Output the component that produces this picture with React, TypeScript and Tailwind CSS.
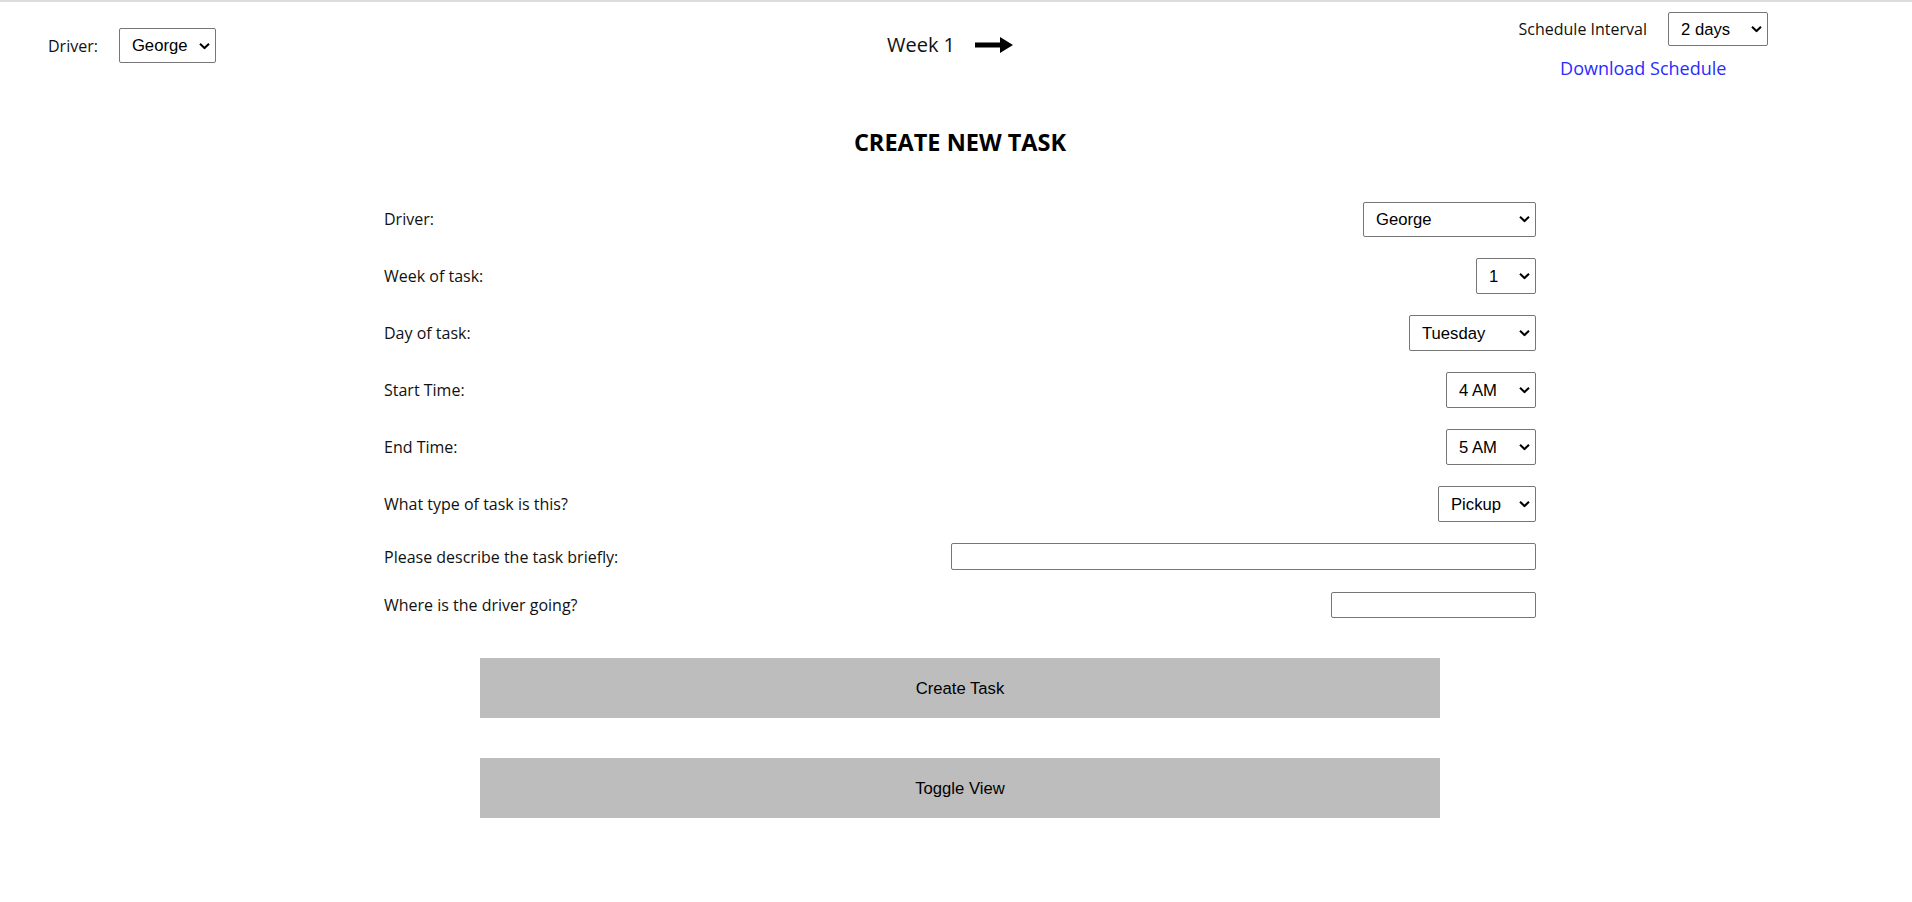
import React from 'react';

const labelFont = "font-['Open_Sans',_'Liberation_Sans',_sans-serif]";
const ctrlFont = "font-['Liberation_Sans',_Arial,_sans-serif]";

function Chevron() {
  return (
    <svg width="11" height="7" viewBox="0 0 11 7" className="pointer-events-none absolute right-[6px] top-1/2 -translate-y-1/2">
      <path d="M1 1.2 L5.5 5.5 L10 1.2" fill="none" stroke="#000" strokeWidth="2" />
    </svg>
  );
}

interface SelectProps {
  value: string;
  options: string[];
  width: string;
  height?: string;
}

function Select({ value, options, width, height = 'h-[36px]' }: SelectProps) {
  return (
    <div className={`relative ${width} ${height}`}>
      <select
        defaultValue={value}
        className={`${ctrlFont} appearance-none w-full h-full border border-[#767676] rounded-[2px] bg-white pl-[12px] pr-[20px] text-[16.67px] text-black outline-none`}
      >
        {options.map((o) => (
          <option key={o}>{o}</option>
        ))}
      </select>
      <Chevron />
    </div>
  );
}

function Arrow() {
  return (
    <svg width="38" height="16" viewBox="0 0 38 16">
      <rect x="0" y="5.5" width="27" height="5" fill="#000" />
      <polygon points="25,0 38,8 25,16" fill="#000" />
    </svg>
  );
}

function Row({ label, children, last = false, input = false }: { label: string; children: React.ReactNode; last?: boolean; input?: boolean }) {
  return (
    <div className={`flex items-center justify-between ${input ? 'h-[27px]' : 'h-[36px]'} ${last ? '' : input ? 'mb-[21px]' : 'mb-[21px]'}`}>
      <span className={`${labelFont} text-[16px] text-[#111]`}>{label}</span>
      {children}
    </div>
  );
}

export default function App() {
  const drivers = ['George', 'Maria', 'Ahmed'];
  const hours = ['12 AM', '1 AM', '2 AM', '3 AM', '4 AM', '5 AM', '6 AM'];
  return (
    <div className="w-full min-h-[902px] bg-white">
      <div className="h-[2px] bg-[#dcdcdc]" />

      {/* Header */}
      <div className="grid grid-cols-3 h-[86px]">
        <div className="flex items-start pl-[48px] pt-[26px]">
          <div className="flex items-center gap-[21px]">
            <span className={`${labelFont} text-[16px] text-[#111]`}>Driver:</span>
            <Select value="George" options={drivers} width="w-[97px]" height="h-[35px]" />
          </div>
        </div>
        <div className="flex justify-center items-start pr-[12px] pt-[29px]">
          <div className="flex items-center gap-[20px] h-[28px]">
            <span className={`${labelFont} text-[20px] leading-[28px] text-[#111]`}>Week 1</span>
            <Arrow />
          </div>
        </div>
        <div className="flex justify-end items-start pr-[144px] pt-[10px]">
          <div className="flex flex-col items-center">
            <div className="flex items-center gap-[21px]">
              <span className={`${labelFont} text-[16px] text-[#111]`}>Schedule Interval</span>
              <Select value="2 days" options={['1 day', '2 days', '3 days']} width="w-[100px]" height="h-[34px]" />
            </div>
            <a href="#" className={`${labelFont} mt-[10px] text-[18px] leading-[24px] text-[#2b2bff]`}>
              Download Schedule
            </a>
          </div>
        </div>
      </div>

      <div className="pl-[8px]">
        <h2 className={`${labelFont} mt-[38px] text-center text-[23.5px] leading-[32px] font-bold text-black`}>
          CREATE NEW TASK
        </h2>

        <div className="w-[1152px] mx-auto mt-[43px]">
          <Row label="Driver:">
            <Select value="George" options={drivers} width="w-[173px]" height="h-[35px]" />
          </Row>
          <Row label="Week of task:">
            <Select value="1" options={['1', '2', '3', '4']} width="w-[60px]" />
          </Row>
          <Row label="Day of task:">
            <Select value="Tuesday" options={['Monday', 'Tuesday', 'Wednesday']} width="w-[127px]" />
          </Row>
          <Row label="Start Time:">
            <Select value="4 AM" options={hours} width="w-[90px]" />
          </Row>
          <Row label="End Time:">
            <Select value="5 AM" options={hours} width="w-[90px]" />
          </Row>
          <Row label="What type of task is this?">
            <Select value="Pickup" options={['Pickup', 'Dropoff']} width="w-[98px]" />
          </Row>
          <Row label="Please describe the task briefly:" input>
            <input type="text" className="w-[585px] h-[27px] border border-[#767676] rounded-[2px] bg-white" />
          </Row>
          <Row label="Where is the driver going?" input last>
            <input type="text" className="w-[205px] h-[26px] border border-[#767676] rounded-[2px] bg-white" />
          </Row>
        </div>

        <div className="w-[960px] mx-auto mt-[40px] flex flex-col gap-[40px]">
          <button className={`${ctrlFont} h-[60px] bg-[#bdbdbd] text-[16.67px] text-black`}>Create Task</button>
          <button className={`${ctrlFont} h-[60px] bg-[#bdbdbd] text-[16.67px] text-black`}>Toggle View</button>
        </div>
      </div>
    </div>
  );
}
